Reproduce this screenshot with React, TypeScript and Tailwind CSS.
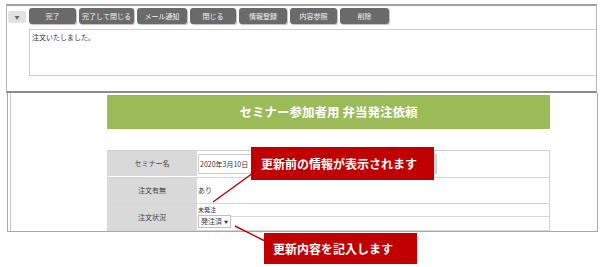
const buttons = [
  { label: "完了", w: "w-[47px]" },
  { label: "完了して閉じる", w: "w-[55px]" },
  { label: "メール通知", w: "w-[50px]" },
  { label: "閉じる", w: "w-[46px]" },
  { label: "情報登録", w: "w-[48px]" },
  { label: "内容参照", w: "w-[47px]" },
  { label: "削除", w: "w-[49px]" },
];

export default function App() {
  return (
    <div className="relative h-[267px] w-[600px] overflow-hidden bg-white font-['Noto_Sans_CJK_JP','Noto_Sans',sans-serif] text-[#333]">
      {/* upper form frame */}
      <div className="pl-[6px] pt-[4px]">
        <div className="h-[89px] w-[591px] border-x border-t-2 border-b-2 border-x-[#b4b4b4] border-t-[#a0a0a0] border-b-[#8a8a8a]">
          <div className="flex items-start pl-[1px] pt-[2px]">
            <div className="mt-[3px] flex h-[12px] w-[18px] items-center justify-center rounded-[2px] bg-[#e2e2e2] text-[5px] text-[#666]">
              ▼
            </div>
            <div className="ml-[3px] flex gap-[3px]">
              {buttons.map((b) => (
                <div
                  key={b.label}
                  className={`${b.w} flex h-[16px] items-center justify-center rounded-[3px] bg-[#6a6a6a] text-[7px] leading-none text-[#f2f2f2] shadow-[1px_1px_1px_rgba(0,0,0,0.25)]`}
                >
                  {b.label}
                </div>
              ))}
            </div>
          </div>
          <div className="ml-[22px] mt-[5px] h-[47px] border border-r-0 border-[#cdcdcd] px-[2px] pt-[2px] text-[7px] leading-[10px]">
            注文いたしました。
          </div>
        </div>
      </div>

      {/* lower page frame */}
      <div className="ml-[7px] h-[139px] w-[591px] border-x border-b border-[#a8a8a8]">
        <div className="ml-[2px] h-full border-l border-[#c4c4c4] pt-[2px]">
          <div className="ml-[96px] flex h-[34px] w-[443px] items-center justify-center bg-[#9bbb59] text-[12.5px] font-bold text-white">
            セミナー参加者用 弁当発注依頼
          </div>

          <div className="ml-[96px] mt-[21px] w-[443px] border-r border-t border-[#cfcfcf] text-[7px] leading-none">
            {/* row 1 */}
            <div className="flex h-[27px] border-b border-[#d6d6d6]">
              <div className="flex w-[90px] items-center justify-center border-b border-white bg-[#d9d9d9] text-[#444]">
                セミナー名
              </div>
              <div className="flex flex-1 items-center pl-[1px]">
                <div className="flex h-[20px] w-[239px] items-center border border-[#cfcfcf] pl-[1px]">
                  <span className="flex-1">2020年3月10日</span>
                  <span className="h-full w-[4px] bg-[#d4d4d4]" />
                </div>
              </div>
            </div>
            {/* row 2 */}
            <div className="flex h-[26px] border-b border-[#d6d6d6]">
              <div className="flex w-[90px] items-center justify-center bg-[#d9d9d9] text-[#444]">
                注文有無
              </div>
              <div className="flex flex-1 items-center pl-[1px]">あり</div>
            </div>
            {/* row 3 */}
            <div className="flex h-[27px] border-b border-[#d6d6d6]">
              <div className="flex w-[90px] items-center justify-center bg-[#d9d9d9] text-[#444]">
                注文状況
              </div>
              <div className="flex-1 pl-[1px] pt-[2px]">
                <div className="text-[6px] leading-[7px]">未発注</div>
                <div className="flex items-start">
                  <div className="mt-[2px] flex h-[13px] w-[33px] items-center border border-[#bdbdbd] pl-[2px] text-[7px]">
                    発注済 <span className="ml-[2px] text-[4px]">▼</span>
                  </div>
                  <div className="mt-[3px] flex-1 border-t border-[#d6d6d6]" />
                </div>
              </div>
            </div>
          </div>
        </div>
      </div>

      {/* annotation pointers */}
      <svg className="absolute left-0 top-0" width="600" height="267" viewBox="0 0 600 267">
        <line x1="253" y1="173" x2="213" y2="202" stroke="#c00000" strokeWidth="1.5" />
        <line x1="235" y1="226" x2="265" y2="241" stroke="#c00000" strokeWidth="1.5" />
      </svg>

      {/* callouts */}
      <div className="absolute left-[251px] top-[147px] flex h-[33px] w-[183px] items-center bg-[#c00000] pl-[10px] text-[12px] font-bold text-white">
        更新前の情報が表示されます
      </div>
      <div className="absolute left-[264px] top-[233px] flex h-[31px] w-[153px] items-center bg-[#c00000] pl-[9px] text-[12px] font-bold text-white">
        更新内容を記入します
      </div>
    </div>
  );
}
